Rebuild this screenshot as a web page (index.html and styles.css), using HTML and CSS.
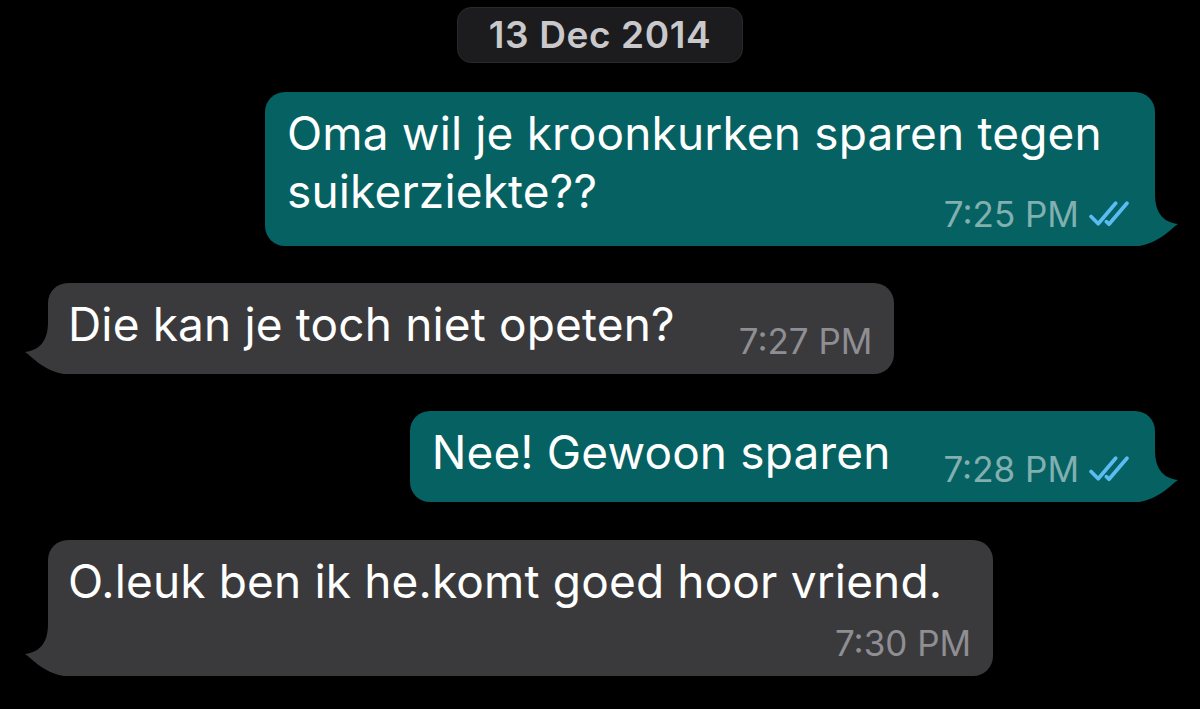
FILE: index.html
```html
<!DOCTYPE html>
<html lang="nl">
<head>
<meta charset="utf-8">
<title>Chat</title>
<link rel="stylesheet" href="styles.css">
</head>
<body>
<div class="chat">
  <div class="date">13 Dec 2014</div>

  <div class="bubble bubble--out bubble--wrap">
    <p class="text">Oma wil je kroonkurken sparen tegen suikerziekte??<span class="meta meta--float"><span class="time">7:25 PM</span><svg class="ticks" viewBox="0 0 40 26"><path d="M2 15 L9 22 L26 2"/><path d="M17 20 L19.5 22.5 L37 2"/></svg></span></p>
    <svg class="tail" viewBox="0 0 44 52"><path d="M20 0 C20 16 26 28 43 30 C34 36 26 48 4 52 L0 52 L0 0 Z"/></svg>
  </div>

  <div class="bubble bubble--in bubble--row">
    <p class="text">Die kan je toch niet opeten?</p>
    <span class="meta"><span class="time">7:27 PM</span></span>
    <svg class="tail" viewBox="0 0 44 52"><path d="M20 0 C20 16 26 28 43 30 C34 36 26 48 4 52 L0 52 L0 0 Z"/></svg>
  </div>

  <div class="bubble bubble--out bubble--row">
    <p class="text">Nee! Gewoon sparen</p>
    <span class="meta"><span class="time">7:28 PM</span><svg class="ticks" viewBox="0 0 40 26"><path d="M2 15 L9 22 L26 2"/><path d="M17 20 L19.5 22.5 L37 2"/></svg></span>
    <svg class="tail" viewBox="0 0 44 52"><path d="M20 0 C20 16 26 28 43 30 C34 36 26 48 4 52 L0 52 L0 0 Z"/></svg>
  </div>

  <div class="bubble bubble--in bubble--stack">
    <p class="text">O.leuk ben ik he.komt goed hoor vriend.</p>
    <span class="meta"><span class="time">7:30 PM</span></span>
    <svg class="tail" viewBox="0 0 44 52"><path d="M20 0 C20 16 26 28 43 30 C34 36 26 48 4 52 L0 52 L0 0 Z"/></svg>
  </div>
</div>
</body>
</html>
```

FILE: styles.css
```css
html, body {
  margin: 0;
  background: #000;
}

body {
  font-family: Inter, "Noto Sans", "Liberation Sans", sans-serif;
  color: #fff;
}

.chat {
  display: flex;
  flex-direction: column;
  box-sizing: border-box;
  height: 709px;
  padding-top: 7px;
  overflow: hidden;
}

.date {
  align-self: center;
  box-sizing: border-box;
  height: 56px;
  padding: 0 31px;
  margin-bottom: 29px;
  border-radius: 14px;
  background: #1c1c1e;
  border: 1px solid #2a2a2d;
  color: #c9c9cc;
  font-size: 37px;
  font-weight: 600;
  letter-spacing: 0.6px;
  line-height: 54px;
}

.bubble {
  position: relative;
  box-sizing: border-box;
  border-radius: 20px;
  padding-top: 12px;
}

.bubble + .bubble {
  margin-top: 37px;
}

.chat > .bubble:last-child {
  margin-top: 38px;
}

.bubble--out {
  align-self: flex-end;
  margin-right: 45px;
  padding-left: 22px;
  padding-right: 25px;
  background: #056162;
}

.bubble--in {
  align-self: flex-start;
  margin-left: 48px;
  padding-left: 20px;
  padding-right: 22px;
  background: #3a3a3c;
}

.text {
  margin: 0;
  font-size: 46px;
  letter-spacing: 0.15px;
  line-height: 58px;
}

.meta {
  display: flex;
  align-items: center;
  gap: 10px;
  font-size: 35px;
  letter-spacing: 0;
  line-height: 40px;
  white-space: nowrap;
}

.bubble--out .meta {
  color: rgba(255, 255, 255, 0.5);
}

.bubble--in .meta {
  color: #8e8e93;
}

.ticks {
  width: 41px;
  height: 27px;
  fill: none;
  stroke: #5bbcf2;
  stroke-width: 3.6;
  stroke-linecap: round;
  stroke-linejoin: round;
}

/* single line: text and time side by side */
.bubble--row {
  display: flex;
  align-items: flex-start;
  padding-bottom: 13px;
}

.bubble--row .meta {
  margin-top: 26px;
}

.bubble--out.bubble--row {
  gap: 53px;
}

.bubble--in.bubble--row {
  gap: 64px;
}

/* wrapped text: time floats beside the last line */
.bubble--wrap {
  display: flow-root;
  max-width: 890px;
  padding-bottom: 12px;
}

.meta--float {
  float: right;
  margin-top: 32px;
  margin-left: 24px;
}

/* time on its own line under the text */
.bubble--stack {
  padding-bottom: 13px;
}

.bubble--stack .text {
  margin-right: 29px;
}

.bubble--stack .meta {
  justify-content: flex-end;
  margin-top: 13px;
}

.tail {
  position: absolute;
  bottom: 0;
  width: 44px;
  height: 52px;
}

.bubble--out .tail {
  right: -24px;
  fill: #056162;
}

.bubble--in .tail {
  left: -24px;
  transform: scaleX(-1);
  fill: #3a3a3c;
}
```
